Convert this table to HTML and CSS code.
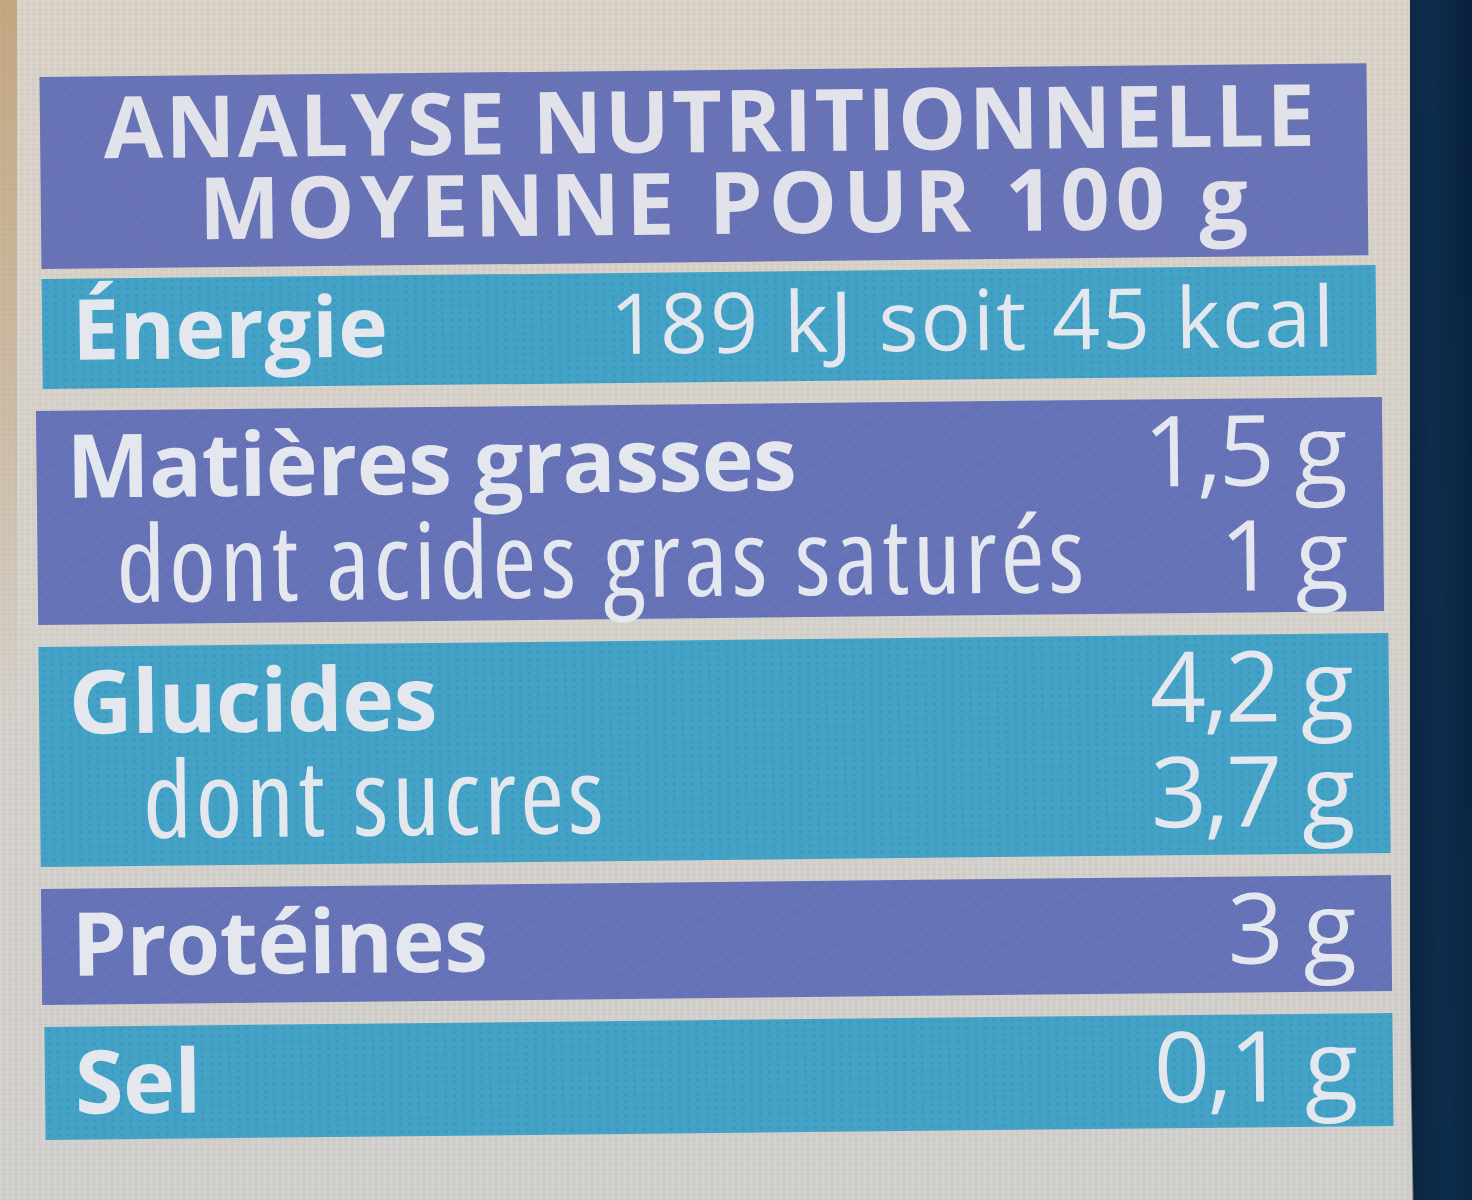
FILE: index.html
```html
<!DOCTYPE html>
<html lang="fr">
<head>
<meta charset="utf-8">
<title>Analyse nutritionnelle</title>
<link rel="stylesheet" href="styles.css">
</head>
<body>
<div class="page">
  <main class="sheet">
    <section class="label">
      <header class="head">
        <div class="head-line head-line-1">ANALYSE NUTRITIONNELLE</div>
        <div class="head-line head-line-2">MOYENNE POUR 100 g</div>
      </header>
      <div class="row teal energy">
        <div class="line"><span class="name">Énergie</span><span class="val">189 kJ soit 45 kcal</span></div>
      </div>
      <div class="row purple fat">
        <div class="line"><span class="name">Matières grasses</span><span class="val">1,5 g</span></div>
        <div class="line"><span class="sub sub-fat">dont acides gras saturés</span><span class="val">1 g</span></div>
      </div>
      <div class="row teal carb">
        <div class="line"><span class="name">Glucides</span><span class="val">4,2 g</span></div>
        <div class="line"><span class="sub sub-carb">dont sucres</span><span class="val">3,7 g</span></div>
      </div>
      <div class="row purple prot">
        <div class="line"><span class="name">Protéines</span><span class="val">3 g</span></div>
      </div>
      <div class="row teal salt">
        <div class="line"><span class="name">Sel</span><span class="val">0,1 g</span></div>
      </div>
    </section>
  </main>
  <div class="edge"></div>
</div>
</body>
</html>
```

FILE: styles.css
```css
* { box-sizing: border-box; margin: 0; padding: 0; }

html, body {
  width: 1472px;
  height: 1200px;
  overflow: hidden;
}

body {
  background: #d3cfc8;
  font-family: "Open Sans", "Noto Sans", "DejaVu Sans", sans-serif;
  color: #e4e8ee;
}

.page {
  display: flex;
  height: 1200px;
}

.sheet {
  flex: 1;
  padding: 70px 0 0 38px;
  background:
    linear-gradient(180deg, rgba(185, 148, 100, 0.7) 0, rgba(185, 148, 100, 0.35) 35%, rgba(185, 148, 100, 0) 60%) left top / 17px 100% no-repeat,
    repeating-linear-gradient(90deg, rgba(255, 255, 255, 0.10) 0 2px, rgba(255, 255, 255, 0) 2px 6px),
    repeating-linear-gradient(0deg, rgba(90, 80, 70, 0.05) 0 1px, rgba(0, 0, 0, 0) 1px 5px),
    linear-gradient(180deg, #d8d1c6 0, #d4d0ca 50%, #d0cecb 100%);
}

.edge {
  width: 62px;
  background: linear-gradient(89.1deg, #d0cdc8 0 2px, #0a2440 4px, #0e2d4c 45%, #08213c 100%);
}

.label {
  display: flex;
  flex-direction: column;
  width: 1352px;
  transform: rotate(-0.6deg);
}

.head {
  margin-left: 7px;
  width: 1327px;
  height: 192px;
  padding-top: 8px;
  display: flex;
  flex-direction: column;
  align-items: center;
  background-color: #6670b4;
  background-image: repeating-linear-gradient(135deg, rgba(255, 255, 255, 0.05) 0 1px, rgba(255, 255, 255, 0) 1px 3px);
  font-weight: 700;
  font-size: 86px;
  line-height: 82px;
  color: #e2e3ea;
}

.head-line-1 { letter-spacing: 2.5px; margin-left: 14px; }
.head-line-2 { letter-spacing: 6px; margin-left: 44px; }

.row {
  display: flex;
  flex-direction: column;
  margin-top: 22px;
  padding: 0 38px 0 30px;
}

.purple {
  background-color: #6370b5;
  background-image: repeating-linear-gradient(135deg, rgba(255, 255, 255, 0.06) 0 1px, rgba(255, 255, 255, 0) 1px 3px);
}

.teal {
  background-color: #43a2c5;
  background-image: radial-gradient(circle, rgba(20, 90, 130, 0.16) 1px, rgba(0, 0, 0, 0) 1.6px);
  background-size: 9px 7px;
}

.line {
  display: flex;
  justify-content: space-between;
  align-items: baseline;
  line-height: 98px;
}

.name {
  font-weight: 700;
  font-size: 88px;
  letter-spacing: -0.5px;
}

.sub {
  font-weight: 400;
  font-size: 106px;
  font-stretch: 75%;
  letter-spacing: 4px;
}

.val {
  font-weight: 400;
  font-size: 98px;
  letter-spacing: -3px;
}

.sub-fat { margin-left: 49px; }
.sub-carb { margin-left: 73px; }

.energy {
  margin-top: 10px;
  margin-left: 7px;
  width: 1334px;
  height: 110px;
  padding-top: 4px;
  padding-right: 40px;
}

.energy .line { line-height: 90px; }
.energy .name { font-size: 84px; letter-spacing: 0.5px; }
.energy .val { font-size: 84px; letter-spacing: 2px; }

.fat { width: 1346px; height: 214px; }
.carb { width: 1350px; height: 220px; }
.prot { width: 1350px; height: 116px; }
.salt { margin-left: 2px; width: 1348px; height: 113px; }
```
